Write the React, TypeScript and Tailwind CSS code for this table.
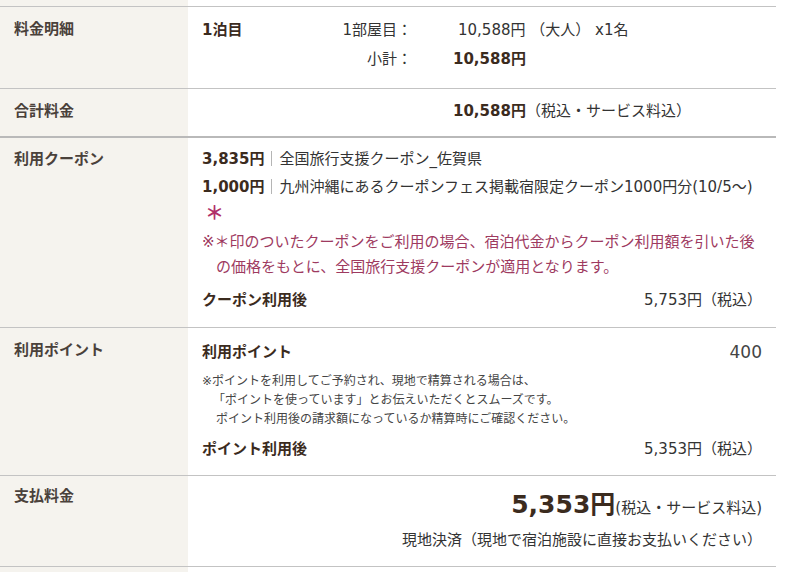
import type { ReactNode } from "react"

interface RowProps {
  label?: string
  labelPad?: string
  thick?: boolean
  children?: ReactNode
}

function Row({ label, labelPad = "pt-[12px]", thick, children }: RowProps) {
  return (
    <div className={`flex ${thick ? "border-b-2 border-[#b9b9b9]" : "border-b border-[#c3c3c3]"}`}>
      <div className={`w-[188px] shrink-0 bg-[#f5f3ee] px-[14px] ${labelPad} font-bold leading-[20px] text-[#4a413b]`}>
        {label}
      </div>
      <div className="min-w-0 flex-1 px-[14px]">{children}</div>
    </div>
  )
}

const Bar = () => <span className="mx-[7px] inline-block h-[15px] w-px bg-[#b5b5b5] align-[-2px]" />

export default function App() {
  return (
    <div className="min-h-[572px] bg-white font-['DejaVu_Sans','Noto_Sans_CJK_JP',sans-serif] text-[15px] text-[#333]">
      <div className="w-[776px]">
        {/* previous row, cut off */}
        <div className="flex h-[7px] border-b border-[#c3c3c3]">
          <div className="w-[188px] bg-[#f5f3ee]" />
        </div>

        {/* 料金明細 */}
        <Row label="料金明細">
          <div className="grid grid-cols-[140px_70px_1fr] gap-y-[9px] pt-[13px] pb-[19px] leading-[20px]">
            <div className="font-bold text-[#3b2b1e]">1泊目</div>
            <div className="text-right">1部屋目：</div>
            <div className="ml-[41px] whitespace-nowrap pl-[5px]">10,588円 （大人） x1名</div>
            <div />
            <div className="text-right">小計：</div>
            <div className="ml-[41px] font-bold text-[#3b2b1e]">10,588円</div>
          </div>
        </Row>

        {/* 合計料金 */}
        <Row label="合計料金" thick>
          <div className="pt-[12px] pb-[15px] pl-[251px] leading-[20px] whitespace-nowrap">
            <span className="font-bold text-[#3b2b1e]">10,588円</span>
            <span>（税込・サービス料込）</span>
          </div>
        </Row>

        {/* 利用クーポン */}
        <Row label="利用クーポン" labelPad="pt-[11px]">
          <div className="pt-[11px] pb-[17px] leading-[20px]">
            <div className="whitespace-nowrap">
              <span className="font-bold text-[#3b2b1e]">3,835円</span>
              <Bar />
              全国旅行支援クーポン_佐賀県
            </div>
            <div className="mt-[8px] whitespace-nowrap">
              <span className="font-bold text-[#3b2b1e]">1,000円</span>
              <Bar />
              九州沖縄にあるクーポンフェス掲載宿限定クーポン1000円分(10/5〜)
            </div>
            <div className="mt-[5px] h-[22px] pl-[3px] text-[19px] leading-[22px] font-bold text-[#b0306a]">＊</div>
            <div className="mt-[6px] pl-[14px] -indent-[14px] leading-[25px] text-[#9e3a5f]">
              ※＊印のついたクーポンをご利用の場合、宿泊代金からクーポン利用額を引いた後の価格をもとに、全国旅行支援クーポンが適用となります。
            </div>
            <div className="mt-[10px] flex justify-between">
              <span className="font-bold text-[#3b2b1e]">クーポン利用後</span>
              <span>5,753円（税込）</span>
            </div>
          </div>
        </Row>

        {/* 利用ポイント */}
        <Row label="利用ポイント">
          <div className="pt-[14px] pb-[16px] leading-[20px]">
            <div className="flex items-center justify-between">
              <span className="font-bold text-[#3b2b1e]">利用ポイント</span>
              <span className="text-[17px] text-[#444]">400</span>
            </div>
            <div className="mt-[10px] text-[12px] leading-[19px] text-[#444]">
              <div>※ポイントを利用してご予約され、現地で精算される場合は、</div>
              <div className="pl-[11px]">「ポイントを使っています」とお伝えいただくとスムーズです。</div>
              <div className="pl-[14px]">ポイント利用後の請求額になっているか精算時にご確認ください。</div>
            </div>
            <div className="mt-[10px] flex justify-between">
              <span className="font-bold text-[#3b2b1e]">ポイント利用後</span>
              <span>5,353円（税込）</span>
            </div>
          </div>
        </Row>

        {/* 支払料金 */}
        <Row label="支払料金" labelPad="pt-[10px]">
          <div className="pt-[14px] pb-[16px] text-right">
            <div className="h-[30px] leading-[30px] whitespace-nowrap">
              <span className="text-[25px] font-bold text-[#3b2b1e]">5,353円</span>
              <span>(税込・サービス料込)</span>
            </div>
            <div className="mt-[10px] leading-[20px]">現地決済（現地で宿泊施設に直接お支払いください）</div>
          </div>
        </Row>

        <div className="flex h-[5px]">
          <div className="w-[188px] bg-[#f5f3ee]" />
        </div>
      </div>
    </div>
  )
}
